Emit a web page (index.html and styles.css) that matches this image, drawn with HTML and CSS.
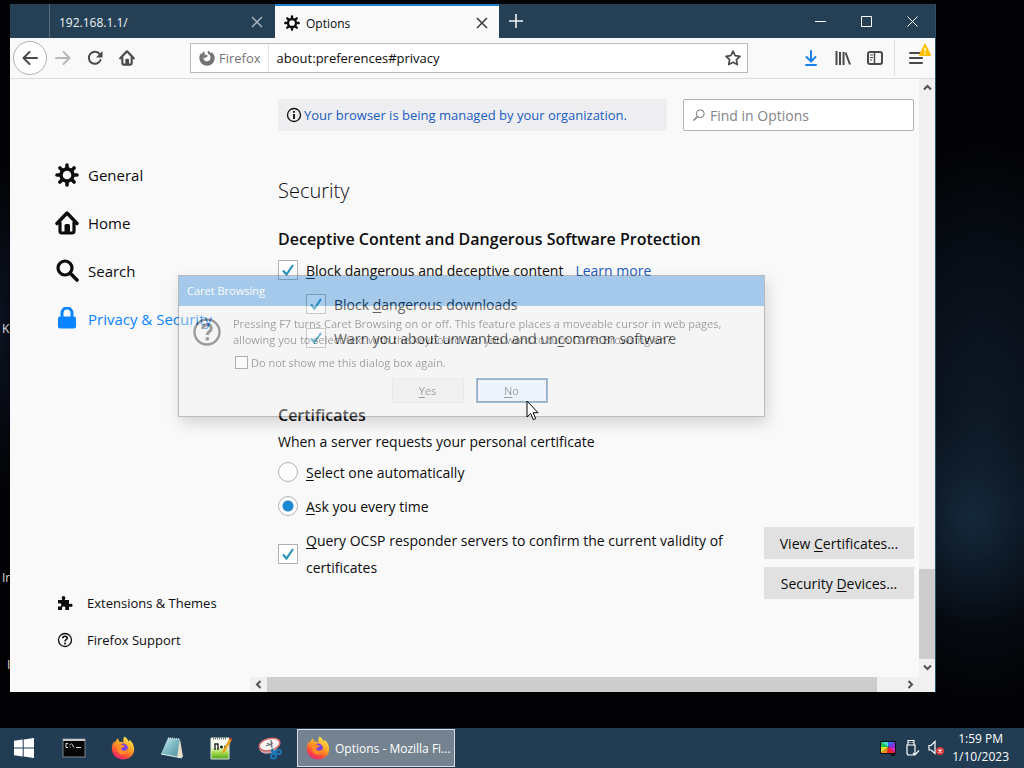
FILE: index.html
```html
<!DOCTYPE html>
<html lang="en">
<head>
  <meta charset="utf-8">
  <meta name="viewport" content="width=device-width, initial-scale=1">
  <title>Options</title>
  <link rel="stylesheet" href="styles.css">
</head>
<body>
  <!-- Shared icons -->
  <svg class="sprite" aria-hidden="true">
    <symbol id="gear" viewBox="0 0 24 24">
      <circle cx="12" cy="12" r="6" fill="none" stroke="currentColor" stroke-width="3.4"/>
      <path d="M12 2v3M12 19v3M2 12h3M19 12h3M4.900 4.900l2 2M17.100 17.100l2 2M4.900 19.100l2-2M17.100 6.900l2-2" stroke="currentColor" stroke-width="3.6" stroke-linecap="round"/>
    </symbol>
    <symbol id="home" viewBox="0 0 24 24">
      <path d="M2 12.500L12 2l10 10.500" fill="none" stroke="currentColor" stroke-width="3.4" stroke-linecap="round" stroke-linejoin="round"/>
      <path d="M5 11v9q0 2 2 2h10q2 0 2-2v-9" fill="none" stroke="currentColor" stroke-width="3.2"/>
      <path d="M9.500 22v-7.500q0-1.500 1.500-1.500h2.500q1.500 0 1.500 1.500V22z" fill="currentColor"/>
    </symbol>
    <symbol id="firefox" viewBox="0 0 24 24">
      <linearGradient id="fx-flame" x1="0.8" y1="0.1" x2="0.3" y2="1">
        <stop offset="0" stop-color="#ffe14a"/>
        <stop offset="0.45" stop-color="#ff9a1f"/>
        <stop offset="0.75" stop-color="#ff4a3d"/>
        <stop offset="1" stop-color="#e8207c"/>
      </linearGradient>
      <path d="M13.500 0.500c2.500 1.500 3.500 3.300 4 5 .8-.2 1-1 .9-2 2.800 2.400 4.800 6 4.800 9.500C23.200 19 18.400 23.500 12 23.500S.8 18.800.8 12.600c0-3 1-5.600 2.400-7.600 0 1 .2 1.700.6 2.200C4.400 5 5.600 3.300 7.200 2.200c0 1.500.5 2.800 1.600 3.600 1.500-.1 3 .2 4 .8-.9-2.400-.6-4.400.7-6.100z" fill="url(#fx-flame)"/>
      <circle cx="12" cy="12.500" r="5" fill="#7542e5"/>
      <path d="M6 8.500c2-1.200 4-.6 5.500.5 1.500.2 2.300.8 2.300 1.600-1 .9-2.600.7-3.300 1.500-.6.900.3 2.700 2.500 2.700 2 0 3.300-1.500 3.300-3.200 1.500 4.200-1.500 7-4.800 7-4.200 0-6.800-4.800-5.500-10.100z" fill="#ff8b26"/>
    </symbol>
  </svg>

  <main class="desktop">
    <ul class="desktop-icons">
      <li class="shortcut shortcut-1">K</li>
      <li class="shortcut shortcut-2">Ir</li>
      <li class="shortcut shortcut-3">I</li>
    </ul>

    <section class="window">
      <div class="titlebar">
        <div class="tab">
          <span class="tab-title">192.168.1.1/</span>
          <button class="tab-close" aria-label="Close tab">
            <svg width="12" height="12" viewBox="0 0 12 12"><path d="M1 1l10 10M11 1L1 11" stroke="currentColor" stroke-width="1.5"/></svg>
          </button>
        </div>
        <div class="tab tab-active">
          <svg width="16" height="16"><use href="#gear"/></svg>
          <span class="tab-title">Options</span>
          <button class="tab-close" aria-label="Close tab">
            <svg width="12" height="12" viewBox="0 0 12 12"><path d="M1 1l10 10M11 1L1 11" stroke="currentColor" stroke-width="1.5"/></svg>
          </button>
        </div>
        <button class="new-tab" aria-label="New tab">
          <svg width="14" height="14" viewBox="0 0 14 14"><path d="M7 0v14M0 7h14" stroke="currentColor" stroke-width="1.6"/></svg>
        </button>
        <div class="window-controls">
          <button class="window-btn" aria-label="Minimize">
            <svg width="11" height="11" viewBox="0 0 11 11"><path d="M0 5.500h11" stroke="currentColor"/></svg>
          </button>
          <button class="window-btn" aria-label="Maximize">
            <svg width="11" height="11" viewBox="0 0 11 11"><path d="M.5.500h10v10H.5z" fill="none" stroke="currentColor"/></svg>
          </button>
          <button class="window-btn" aria-label="Close">
            <svg width="11" height="11" viewBox="0 0 11 11"><path d="M.5.500l10 10M10.500.500l-10 10" stroke="currentColor"/></svg>
          </button>
        </div>
      </div>

      <div class="toolbar">
        <button class="tool-btn back-btn" aria-label="Back">
          <svg width="16" height="16" viewBox="0 0 16 16"><path d="M15 8H2M7.500 2L1.500 8l6 6" fill="none" stroke="currentColor" stroke-width="2" stroke-linecap="round" stroke-linejoin="round"/></svg>
        </button>
        <button class="tool-btn forward-btn" aria-label="Forward" disabled>
          <svg width="16" height="16" viewBox="0 0 16 16"><path d="M1 8h13M8.500 2l6 6-6 6" fill="none" stroke="currentColor" stroke-width="2" stroke-linecap="round" stroke-linejoin="round"/></svg>
        </button>
        <button class="tool-btn" aria-label="Reload">
          <svg width="16" height="16" viewBox="0 0 16 16"><path d="M12.800 4.300A6 6 0 1 0 13.500 10" fill="none" stroke="currentColor" stroke-width="2" stroke-linecap="round"/><path d="M15.500 1v6.500H9z" fill="currentColor"/></svg>
        </button>
        <button class="tool-btn" aria-label="Home">
          <svg width="16" height="16"><use href="#home"/></svg>
        </button>
        <div class="urlbar">
          <span class="identity">
            <svg width="16" height="16" viewBox="0 0 16 16"><path d="M9 .5c1.200.6 2 1.500 2.400 2.700.6-.1.900-.5.900-1.200C14.500 3.500 15.700 5.700 15.700 8A7.700 7.700 0 0 1 .3 8.300C.3 6.300 1 4.300 2.200 2.800c0 .8.200 1.300.6 1.700.5-1.500 1.300-2.500 2.500-3.200 0 1.300.3 2.200 1 2.900-1.300.5-2 1.900-1.900 3.700.1 2 1.700 3.400 3.600 3.400s3.500-1.500 3.500-3.500c0-1.400-.6-2.500-1.500-3.200C8.800 3.500 8.400 2 9 .5z" fill="currentColor"/><path d="M4 5.500l4-.8.8 1.500-2 1.300-1.800 1z" fill="currentColor"/></svg>
            Firefox
          </span>
          <input class="url-input" type="text" aria-label="Address" value="about:preferences#privacy">
          <button class="star-btn" aria-label="Bookmark this page">
            <svg width="16" height="16" viewBox="0 0 16 16"><path d="M8 1.200l2.100 4.500 4.900.6-3.600 3.400.9 4.900L8 12.200l-4.300 2.400.9-4.900L1 6.300l4.900-.6z" fill="none" stroke="currentColor" stroke-width="1.7" stroke-linejoin="round"/></svg>
          </button>
        </div>
        <button class="tool-btn download-btn" aria-label="Downloads">
          <svg width="14" height="16" viewBox="0 0 14 16"><path d="M7 1v10M2.500 7L7 11.500 11.500 7M2 15h10" fill="none" stroke="currentColor" stroke-width="2" stroke-linecap="round" stroke-linejoin="round"/></svg>
        </button>
        <button class="tool-btn" aria-label="Library">
          <svg width="16" height="16" viewBox="0 0 16 16"><path d="M1.500 1v14M5 2v13M8.500 2v13M10.500 2.500l4.500 12" fill="none" stroke="currentColor" stroke-width="2"/></svg>
        </button>
        <button class="tool-btn" aria-label="Sidebars">
          <svg width="16" height="14" viewBox="0 0 16 14"><rect x="1" y="1" width="14" height="12" rx="2" fill="none" stroke="currentColor" stroke-width="2"/><path d="M7.500 1v12" stroke="currentColor" stroke-width="1.5"/><path d="M3 4h3M3 6.500h3M3 9h2" stroke="currentColor"/></svg>
        </button>
        <div class="menu-area">
          <button class="tool-btn" aria-label="Open menu">
            <svg width="14" height="12" viewBox="0 0 14 12"><path d="M1 1h12M1 6h12M1 11h12" stroke="currentColor" stroke-width="2" stroke-linecap="round"/></svg>
          </button>
          <svg class="warning-badge" width="12" height="12" viewBox="0 0 12 12"><path d="M6 1l5 10H1z" fill="#ffbf00" stroke="#ffbf00" stroke-width="2" stroke-linejoin="round"/><path d="M6 3.500v4M6 8.800v1.400" stroke="#fff" stroke-width="1.4"/></svg>
        </div>
      </div>

      <div class="page">
        <nav class="sidebar">
          <a class="category" href="#general">
            <svg width="24" height="24"><use href="#gear"/></svg>
            General
          </a>
          <a class="category" href="#home-pane">
            <svg width="24" height="24"><use href="#home"/></svg>
            Home
          </a>
          <a class="category" href="#search">
            <svg width="24" height="24" viewBox="0 0 24 24"><circle cx="10" cy="9" r="7" fill="none" stroke="currentColor" stroke-width="3.2"/><path d="M15.500 14.500l6.500 6.500" stroke="currentColor" stroke-width="3.6" stroke-linecap="round"/></svg>
            Search
          </a>
          <a class="category category-selected" href="#privacy">
            <svg width="24" height="24" viewBox="0 0 24 24"><rect x="3" y="9.500" width="18" height="12" rx="2" fill="currentColor"/><path d="M7 10.500V6a5 5 0 0 1 10 0v4.500" fill="none" stroke="currentColor" stroke-width="3"/></svg>
            Privacy &amp; Security
          </a>
          <div class="sidebar-footer">
            <a class="footer-link" href="#addons">
              <svg width="16" height="16" viewBox="0 0 16 16"><path d="M1 5h4c.5-.5-.3-1-.3-2.200C4.700 1.700 5.500 1 6.500 1s1.800.7 1.800 1.800C8.300 4 7.500 4.500 8 5h4v4c.5.400 1-.3 2-.3s1.600.6 1.600 1.600-.6 1.600-1.600 1.600-1.500-.8-2-.3V15H8.300c-.5-.5.200-1 .2-1.900 0-.9-.7-1.600-1.800-1.600s-1.800.7-1.800 1.600c0 .9.600 1.400.1 1.900H1v-3.600c.5-.5 1 .2 1.800.2s1.500-.7 1.500-1.700S3.600 8.200 2.800 8.200 1.500 8.900 1 8.400z" fill="currentColor"/></svg>
              Extensions &amp; Themes
            </a>
            <a class="footer-link" href="#support">
              <svg width="16" height="16" viewBox="0 0 16 16"><circle cx="8" cy="8" r="6.500" fill="none" stroke="currentColor" stroke-width="1.3"/><path d="M5.800 6.300C5.800 5 6.700 4.300 8 4.300s2.200.8 2.200 1.900c0 1.500-2.200 1.500-2.200 3.200" fill="none" stroke="currentColor" stroke-width="1.6"/><circle cx="8" cy="11.500" r="1" fill="currentColor"/></svg>
              Firefox Support
            </a>
          </div>
        </nav>

        <div class="pane">
          <div class="pane-top">
            <a class="notice" href="#policies">
              <svg width="16" height="16" viewBox="0 0 16 16"><circle cx="8" cy="8" r="6.500" fill="none" stroke="currentColor" stroke-width="1.3"/><path d="M8 7v5M8 4v1.800" stroke="currentColor" stroke-width="1.8"/></svg>
              <span>Your browser is being managed by your organization.</span>
            </a>
            <label class="search-box">
              <svg width="12" height="12" viewBox="0 0 12 12"><circle cx="7.300" cy="4.700" r="3.900" fill="none" stroke="currentColor"/><path d="M4.500 7.500L.5 11.500" stroke="currentColor" stroke-width="1.2"/></svg>
              <input type="text" placeholder="Find in Options" aria-label="Find in Options">
            </label>
          </div>

          <h1>Security</h1>

          <h2>Deceptive Content and Dangerous Software Protection</h2>
          <div class="option">
            <input type="checkbox" id="block-content" checked>
            <label for="block-content"><u>B</u>lock dangerous and deceptive content</label>
            <a class="learn-more" href="#learn">Learn more</a>
          </div>
          <div class="option option-indent">
            <input type="checkbox" id="block-downloads" checked>
            <label for="block-downloads">Block <u>d</u>angerous downloads</label>
          </div>
          <div class="option option-indent">
            <input type="checkbox" id="warn-software" checked>
            <label for="warn-software">Warn you about unwanted and un<u>c</u>ommon software</label>
          </div>

          <h2 class="certificates-title">Certificates</h2>
          <p>When a server requests your personal certificate</p>
          <div class="certificates">
            <div class="certificate-options">
              <div class="option">
                <input type="radio" name="cert" id="cert-auto">
                <label for="cert-auto"><u>S</u>elect one automatically</label>
              </div>
              <div class="option">
                <input type="radio" name="cert" id="cert-ask" checked>
                <label for="cert-ask"><u>A</u>sk you every time</label>
              </div>
              <div class="option option-wrap">
                <input type="checkbox" id="ocsp" checked>
                <label for="ocsp"><u>Q</u>uery OCSP responder servers to confirm the current validity of certificates</label>
              </div>
            </div>
            <div class="certificate-buttons">
              <button class="page-btn">View <u>C</u>ertificates...</button>
              <button class="page-btn">Security <u>D</u>evices...</button>
            </div>
          </div>
        </div>

        <div class="scrollbar scrollbar-v">
          <button class="scroll-arrow" aria-label="Scroll up"><svg width="9" height="7" viewBox="0 0 9 7"><path d="M1 5.500L4.500 2 8 5.500" fill="none" stroke="currentColor" stroke-width="2"/></svg></button>
          <div class="scroll-track"><div class="scroll-thumb"></div></div>
          <button class="scroll-arrow" aria-label="Scroll down"><svg width="9" height="7" viewBox="0 0 9 7"><path d="M1 1.500L4.500 5 8 1.500" fill="none" stroke="currentColor" stroke-width="2"/></svg></button>
        </div>
        <div class="scrollbar scrollbar-h">
          <button class="scroll-arrow" aria-label="Scroll left"><svg width="7" height="9" viewBox="0 0 7 9"><path d="M5.500 1L2 4.500 5.500 8" fill="none" stroke="currentColor" stroke-width="2"/></svg></button>
          <div class="scroll-track"><div class="scroll-thumb"></div></div>
          <button class="scroll-arrow" aria-label="Scroll right"><svg width="7" height="9" viewBox="0 0 7 9"><path d="M1.500 1L5 4.500 1.500 8" fill="none" stroke="currentColor" stroke-width="2"/></svg></button>
        </div>
      </div>
    </section>

    <!-- Dialog is fading out over the page -->
    <div class="dialog" role="dialog" aria-labelledby="dialog-title">
      <div class="dialog-title" id="dialog-title">Caret Browsing</div>
      <div class="dialog-body">
        <svg class="dialog-icon" width="28" height="28" viewBox="0 0 28 28"><circle cx="14" cy="14" r="12.500" fill="none" stroke="currentColor" stroke-width="2.4"/><path d="M9.800 11c0-2.700 1.800-4.200 4.300-4.200s4.200 1.400 4.200 3.700c0 2.900-3.900 3-3.900 6.500" fill="none" stroke="currentColor" stroke-width="3"/><circle cx="14.300" cy="20.800" r="1.900" fill="currentColor"/></svg>
        <div class="dialog-content">
          <p>Pressing F7 turns Caret Browsing on or off. This feature places a moveable cursor in web pages, allowing you to select text with the keyboard. Do you want to turn Caret Browsing on?</p>
          <div class="dialog-check">
            <input type="checkbox" id="dont-show">
            <label for="dont-show">Do not show me this dialog box again.</label>
          </div>
        </div>
      </div>
      <div class="dialog-buttons">
        <button class="dialog-btn"><u>Y</u>es</button>
        <button class="dialog-btn dialog-btn-focus"><u>N</u>o</button>
      </div>
    </div>

    <svg class="cursor" width="13" height="21" viewBox="0 0 13 21"><path d="M1 1v16l3.700-3.500 2.600 6.200 2.400-1-2.600-6H12z" fill="#fff" stroke="#000"/></svg>
  </main>

  <footer class="taskbar">
    <button class="start-btn" aria-label="Start">
      <svg width="20" height="20" viewBox="0 0 20 20"><path d="M0 2.800L8.700 1.600v7.900H0zM9.700 1.400L20 0v9.500H9.700zM0 10.500h8.700v7.900L0 17.200zM9.700 10.500H20V20L9.700 18.600z" fill="#fff"/></svg>
    </button>
    <button class="task-icon" aria-label="Command Prompt">
      <svg width="24" height="20" viewBox="0 0 24 20"><rect x="1" y="1" width="22" height="18" fill="#050505" stroke="#7d8488"/><path d="M1 2h22" stroke="#c5c9cc" stroke-width="2"/><path d="M6 5.500H4v4h2M8 6v1M8 8.500v1M9.500 5.500l2.500 4M14 9.500h5" fill="none" stroke="#ddd"/></svg>
    </button>
    <button class="task-icon" aria-label="Firefox">
      <svg width="24" height="24"><use href="#firefox"/></svg>
    </button>
    <button class="task-icon" aria-label="Notepad">
      <svg width="24" height="24" viewBox="0 0 24 24">
        <linearGradient id="pad" x1="0" y1="0" x2="1" y2="1"><stop offset="0" stop-color="#d7f1f4"/><stop offset="0.5" stop-color="#7fb9c4"/><stop offset="1" stop-color="#4d8e9c"/></linearGradient>
        <path d="M20 3l3 18-4 1-4-3z" fill="#e8dfc8"/>
        <path d="M8 2l12 1-3 18-16-3z" fill="url(#pad)"/>
        <path d="M8 2l12 1" stroke="#cfd6d8" stroke-width="1.5" stroke-dasharray="1 1"/>
        <path d="M1 18l16 3 5 1" fill="none" stroke="#dff3f5"/>
      </svg>
    </button>
    <button class="task-icon" aria-label="Notepad++">
      <svg width="22" height="24" viewBox="0 0 22 24">
        <linearGradient id="npp" x1="0" y1="0" x2="0" y2="1"><stop offset="0.4" stop-color="#fbfff5"/><stop offset="0.7" stop-color="#a5dc4a"/><stop offset="1" stop-color="#4aa31c"/></linearGradient>
        <path d="M1 2h18v21H1z" fill="url(#npp)" stroke="#e3ead9"/>
        <path d="M3 2.500h14" stroke="#777" stroke-width="2" stroke-dasharray="1 1"/>
        <path d="M5 14V8h3v6M10 11h3M11.500 9.500v3M14 11h3M15.500 9.500v3" fill="none" stroke="#222" stroke-width="1.4"/>
        <path d="M19 3l2.500 1.500L15 16l-2.500 1.500.2-3z" fill="#e9a41e"/>
        <path d="M19 3l1-1.500 2.300 1.500-.8 1.500z" fill="#d93a2b"/>
      </svg>
    </button>
    <button class="task-icon" aria-label="Snipping Tool">
      <svg width="24" height="24" viewBox="0 0 24 24">
        <path d="M1 11c0 7 9 9 16 4l5-6z" fill="#c9a5a8"/>
        <ellipse cx="11.500" cy="8.500" rx="10.500" ry="6" transform="rotate(-14 11.500 8.500)" fill="#f8f4f4" stroke="#cf6a66" stroke-width="1.5"/>
        <path d="M8 10l7-3M13 4l1 8M9 7l5 3" stroke="#70777d" stroke-width="1.3"/>
        <circle cx="15.500" cy="20" r="2.500" fill="none" stroke="#1d78b8" stroke-width="2"/>
        <circle cx="20.500" cy="16" r="2.300" fill="none" stroke="#1d78b8" stroke-width="2"/>
        <path d="M14 13l3 6M13 15l6 1" stroke="#1d78b8" stroke-width="2"/>
      </svg>
    </button>
    <button class="task-btn">
      <svg width="24" height="24"><use href="#firefox"/></svg>
      <span>Options - Mozilla Fi...</span>
    </button>
    <div class="tray">
      <svg width="16" height="16" viewBox="0 0 16 16"><path d="M0 1h16v13H0z" fill="#101018"/><path d="M8 7L1 2v5z" fill="#15c84d"/><path d="M8 7L1 2h7z" fill="#3fe0d0"/><path d="M8 7V2h7z" fill="#3c6cf5"/><path d="M8 7l7-5v6z" fill="#8a34e8"/><path d="M8 7l7 1v5z" fill="#e528b8"/><path d="M8 7l7 6H7z" fill="#ee2424"/><path d="M8 7l-1 6H1z" fill="#f58a1e"/><path d="M8 7l-7 6V7z" fill="#d9e026"/><path d="M11 14h4v2h-4z" fill="#101018"/></svg>
      <svg width="16" height="18" viewBox="0 0 16 18"><path d="M4 6V1.500h6V6M3 6h8v8q0 2-2 2H5q-2 0-2-2z" fill="none" stroke="#fff" stroke-width="1.2"/><path d="M5.500 3.500h1M7.700 3.500h1M9 14l2 2 4-4.500" fill="none" stroke="#fff" stroke-width="1.2"/></svg>
      <svg width="16" height="16" viewBox="0 0 16 16"><path d="M1 5.500h2L7 1.500v12L3 10H1z" fill="none" stroke="#fff" stroke-width="1.2"/><circle cx="12" cy="11" r="4" fill="#d83b3b"/><path d="M10.500 9.500l3 3M13.500 9.500l-3 3" stroke="#fff" stroke-width="1.2"/></svg>
      <div class="clock">
        <span>1:59 PM</span>
        <span>1/10/2023</span>
      </div>
    </div>
  </footer>
</body>
</html>
```

FILE: styles.css
```css
* {
  box-sizing: border-box;
}

body {
  display: flex;
  flex-direction: column;
  height: 100vh;
  margin: 0;
  overflow: hidden;
  background: #020204;
  color: #0c0c0d;
  font-family: "Open Sans", "Noto Sans", sans-serif;
  font-size: 14px;
}

button {
  display: flex;
  align-items: center;
  justify-content: center;
  padding: 0;
  border: none;
  background: none;
  color: inherit;
  font: inherit;
}

a {
  color: inherit;
  text-decoration: none;
}

u {
  text-underline-offset: 2px;
  text-decoration-skip-ink: none;
}

svg {
  display: block;
  flex-shrink: 0;
}

.sprite {
  position: absolute;
  width: 0;
  height: 0;
}

/* Desktop */
.desktop {
  position: relative;
  flex: 1;
  overflow: hidden;
  background:
    radial-gradient(ellipse 90px 110px at 95% 71%, #15293b 0%, rgba(18, 35, 52, 0.6) 45%, transparent 100%),
    radial-gradient(ellipse 150px 290px at 96% 58%, #0e1926 0%, #080e18 55%, transparent 100%),
    radial-gradient(ellipse 30px 180px at 0% 45%, #0b1220 0%, transparent 100%),
    #020204;
}

.desktop-icons {
  margin: 0;
  padding: 0;
  list-style: none;
}

.shortcut {
  position: absolute;
  left: 2px;
  color: #ddd;
  font-size: 12px;
  line-height: 16px;
}

.shortcut-1 {
  top: 321px;
}

.shortcut-2 {
  top: 570px;
}

.shortcut-3 {
  left: 7px;
  top: 657px;
}

/* Browser window */
.window {
  position: absolute;
  inset: 4px 88px 36px 10px;
  display: flex;
  flex-direction: column;
  border-right: 1px solid #2c5068;
  background: #f9f9fa;
}

.titlebar {
  display: flex;
  height: 34px;
  padding-left: 39px;
  background: #253f55;
  color: #f0f4f7;
  font-size: 12px;
}

.tab {
  display: flex;
  align-items: center;
  width: 226px;
  padding: 2px 10px 0 9px;
  border-left: 1px solid #56697a;
}

.tab-active {
  gap: 6px;
  width: 224px;
  padding-right: 9px;
  border-left: none;
  border-top: 2px solid #1f7fc9;
  background: #f9f9fa;
  color: #0c0c0d;
}

.tab-title {
  flex: 1;
}

.tab-close {
  width: 16px;
  height: 16px;
  color: #a9b6c1;
}

.tab-active .tab-close {
  color: #3a3a3a;
}

.new-tab {
  width: 34px;
}

.window-controls {
  display: flex;
  margin-left: auto;
}

.window-btn {
  width: 46px;
  color: #fff;
}

/* Toolbar */
.toolbar {
  display: flex;
  align-items: center;
  height: 41px;
  padding: 0 1px 0 3px;
  border-bottom: 1px solid #dcdcdd;
  background: #f9f9fa;
  color: #4a4a4c;
}

.tool-btn {
  width: 32px;
  height: 32px;
}

.back-btn {
  width: 34px;
  height: 34px;
  border: 1px solid #b1b1b3;
  border-radius: 50%;
  background: #fff;
}

.forward-btn {
  color: #b8b8ba;
}

.download-btn {
  color: #1a82e8;
}

.urlbar {
  display: flex;
  flex: 1;
  align-items: center;
  height: 30px;
  margin: 0 47px;
  border: 1px solid #b9b9bb;
  background: #fff;
}

.identity {
  display: flex;
  align-items: center;
  gap: 4px;
  height: 28px;
  padding: 0 7px 0 8px;
  border-right: 1px solid #e4e4e5;
  color: #737375;
  font-size: 13px;
}

.url-input {
  flex: 1;
  min-width: 0;
  padding: 0 8px;
  border: none;
  background: none;
  color: #0c0c0d;
  font: inherit;
  font-size: 13px;
}

.star-btn {
  width: 28px;
  height: 28px;
}

.menu-area {
  position: relative;
  display: flex;
  align-items: center;
  height: 36px;
  margin-left: 3px;
  padding: 0 2px 0 5px;
  border-left: 1px solid #dedee0;
}

.warning-badge {
  position: absolute;
  top: 4px;
  right: 3px;
}

/* Preferences page */
.page {
  display: grid;
  flex: 1;
  grid-template-columns: 240px 1fr 16px;
  grid-template-rows: 1fr 15px;
  min-height: 0;
}

.sidebar {
  display: flex;
  flex-direction: column;
  grid-row: 1 / 3;
  padding: 72px 0 34px 45px;
}

.category {
  display: flex;
  align-items: center;
  gap: 9px;
  height: 48px;
  font-size: 15px;
  white-space: nowrap;
}

.category-selected {
  color: #0a84ff;
}

.sidebar-footer {
  margin-top: auto;
  padding-left: 2px;
}

.footer-link {
  display: flex;
  align-items: center;
  gap: 14px;
  height: 37px;
  font-size: 13px;
}

.pane {
  min-width: 0;
  padding: 20px 5px 0 28px;
}

.pane-top {
  display: grid;
  grid-template-columns: 1fr 231px;
  gap: 16px;
}

.notice {
  display: flex;
  align-items: center;
  gap: 2px;
  height: 32px;
  padding: 0 8px;
  background: #eeeef0;
  font-size: 13px;
}

.notice span,
.learn-more {
  color: #1b5cc2;
}

.search-box {
  display: flex;
  align-items: center;
  gap: 5px;
  height: 32px;
  padding: 0 9px;
  border: 1px solid #b1b1b3;
  border-radius: 2px;
  background: #fff;
  color: #737375;
}

.search-box input {
  flex: 1;
  min-width: 0;
  padding: 0;
  border: none;
  background: none;
  font: inherit;
}

.search-box input::placeholder {
  color: #858587;
}

h1 {
  margin: 44px 0 20px;
  font-size: 20px;
  font-weight: 300;
  line-height: 32px;
}

h2 {
  margin: 0 0 2px;
  font-size: 16px;
  font-weight: 600;
  line-height: 24px;
}

.certificates-title {
  margin-top: 48px;
}

.pane p {
  margin: 0;
  line-height: 26px;
}

.option {
  display: flex;
  align-items: center;
  gap: 8px;
  min-height: 34px;
}

.option-indent {
  padding-left: 28px;
}

.option-wrap {
  margin-top: 4px;
  line-height: 27px;
}

.option input {
  flex-shrink: 0;
  width: 20px;
  height: 20px;
  margin: 0;
  border: 1px solid #b1b1b3;
  appearance: none;
  background: #fff center / 16px no-repeat;
}

.option input[type="checkbox"]:checked {
  background-image: url("data:image/svg+xml,%3Csvg xmlns='http://www.w3.org/2000/svg' viewBox='0 0 16 16'%3E%3Cpath d='M3 8.500l3.500 4L13 3' fill='none' stroke='%232a93b8' stroke-width='2.2'/%3E%3C/svg%3E");
}

.option input[type="radio"] {
  border-radius: 50%;
}

.option input[type="radio"]:checked {
  background-image: radial-gradient(circle, #1c8ad0 5px, transparent 6px);
}

.learn-more {
  margin-left: 4px;
}

.certificates {
  display: grid;
  grid-template-columns: 1fr 150px;
  gap: 0 28px;
}

.certificate-buttons {
  display: flex;
  flex-direction: column;
  gap: 8px;
  padding-top: 72px;
}

.page-btn {
  display: block;
  height: 32px;
  background: #e1e1e2;
}

/* Scrollbars */
.scrollbar {
  display: flex;
  background: #f0f0f1;
}

.scrollbar-v {
  flex-direction: column;
  grid-row: 1 / 3;
  grid-column: 3;
}

.scrollbar-v .scroll-arrow {
  height: 17px;
}

.scrollbar-v .scroll-arrow:last-child {
  height: 33px;
  padding-bottom: 16px;
}

.scrollbar-h {
  grid-column: 2;
}

.scrollbar-h .scroll-arrow {
  width: 17px;
}

.scroll-arrow {
  color: #505050;
}

.scroll-track {
  display: flex;
  flex: 1;
}

.scroll-thumb {
  background: #cdcdcd;
}

.scrollbar-v .scroll-track {
  align-items: flex-end;
}

.scrollbar-v .scroll-thumb {
  width: 100%;
  height: 16%;
}

.scrollbar-h .scroll-thumb {
  width: 96%;
}

/* Fading dialog */
.dialog {
  position: absolute;
  left: 178px;
  top: 275px;
  width: 587px;
  border: 1px solid #555;
  background: #f0f0f0;
  box-shadow: 2px 6px 14px rgba(0, 0, 0, 0.4);
  color: #000;
  font-size: 11px;
  opacity: 0.38;
}

.dialog-title {
  padding: 0 8px;
  background: #1c7cd0;
  color: #fff;
  font-size: 11px;
  line-height: 30px;
}

.dialog-body {
  display: flex;
  gap: 12px;
  padding: 10px 14px 0;
}

.dialog-icon {
  margin-top: 2px;
}

.dialog-content p {
  margin: 0;
  line-height: 16px;
}

.dialog-check {
  display: flex;
  align-items: center;
  gap: 3px;
  height: 16px;
  margin-top: 6px;
}

.dialog-check input {
  width: 13px;
  height: 13px;
  margin: 0 0 0 2px;
  border: 1px solid #333;
  appearance: none;
  background: #fff;
}

.dialog-buttons {
  display: flex;
  justify-content: center;
  gap: 12px;
  padding: 8px 4px 13px 0;
}

.dialog-btn {
  width: 72px;
  height: 25px;
  border: 1px solid #ccc;
  background: #e1e1e1;
}

.dialog-btn-focus {
  border: 2px solid #0a63b5;
  outline: 1px dotted #000;
  outline-offset: -2px;
  background: #d9ecfc;
}

.cursor {
  position: absolute;
  left: 526px;
  top: 400px;
}

/* Taskbar */
.taskbar {
  display: flex;
  height: 40px;
  background: #213c53;
  color: #fff;
  font-size: 12px;
}

.start-btn {
  width: 48px;
  margin-right: 1px;
}

.task-icon {
  width: 49px;
}

.task-btn {
  justify-content: flex-start;
  gap: 5px;
  width: 158px;
  margin: 1px 3px;
  padding: 0 8px;
  border: 1px solid #d8dfe4;
  background: #74838f;
  white-space: nowrap;
}

.tray {
  display: flex;
  align-items: center;
  gap: 8px;
  margin-left: auto;
  padding-right: 15px;
}

.clock {
  display: flex;
  flex-direction: column;
  align-items: center;
  line-height: 18px;
}
```
